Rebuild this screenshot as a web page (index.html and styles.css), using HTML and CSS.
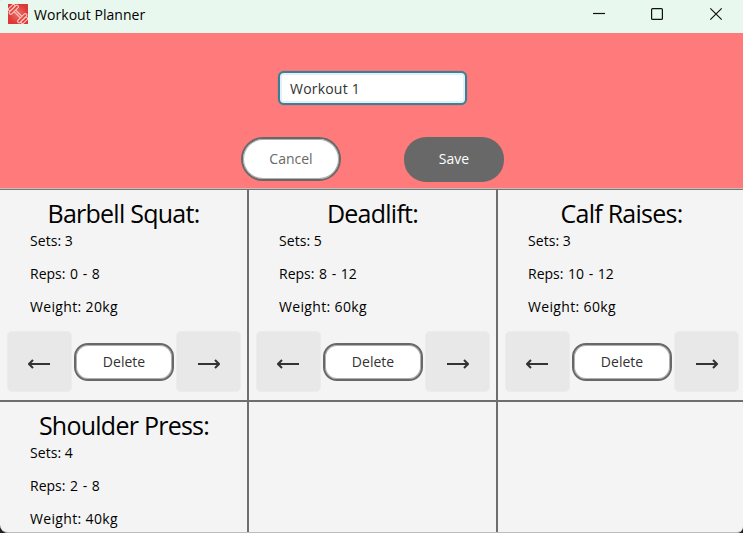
FILE: index.html
```
<!DOCTYPE html>
<html lang="en">
<head>
<meta charset="utf-8">
<title>Workout Planner</title>
<link rel="stylesheet" href="styles.css">
</head>
<body>
<div class="window">
  <header class="titlebar">
    <svg class="logo" width="20" height="20" viewBox="0 0 20 20">
      <defs><radialGradient id="glow"><stop offset="0" stop-color="#e8706f"/><stop offset="1" stop-color="#dc3835"/></radialGradient></defs>
      <rect width="20" height="20" fill="url(#glow)"/>
      <g transform="rotate(45 10 10)" fill="none" stroke="#ffc9c2" stroke-width="1.1">
        <rect x="2.4" y="4.2" width="3.2" height="11.6" rx="1.6"/>
        <rect x="-0.4" y="6" width="2.8" height="8" rx="1.4"/>
        <path d="M5.6 8.9H14.4M5.6 11.1H14.4"/>
        <rect x="14.4" y="4.2" width="3.2" height="11.6" rx="1.6"/>
        <rect x="17.6" y="6" width="2.8" height="8" rx="1.4"/>
      </g>
    </svg>
    <span class="app-name">Workout Planner</span>
    <svg class="controls" width="130" height="14" viewBox="0 0 130 14" fill="none" stroke="#111" stroke-width="1.2">
      <path d="M0 6.5H12"/>
      <rect x="58.6" y="1.6" width="10.8" height="10.8" rx="1"/>
      <path d="M117.3 1.3L128.7 12.7M128.7 1.3L117.3 12.7"/>
    </svg>
  </header>
  <section class="editor">
    <input class="name-field" type="text" value="Workout 1">
    <div class="actions">
      <button class="cancel">Cancel</button>
      <button class="save">Save</button>
    </div>
  </section>
  <main class="grid">
    <article class="cell">
      <h2>Barbell Squat:</h2>
      <p class="sets">Sets: 3</p><p class="reps">Reps: 0 - 8</p><p class="weight">Weight: 20kg</p>
      <div class="tools">
        <button class="move"><svg width="22" height="12" viewBox="0 0 22 12"><path d="M1 6H22M5 2L1 6L5 10"/></svg></button>
        <button class="delete">Delete</button>
        <button class="move next"><svg width="22" height="12" viewBox="0 0 22 12"><path d="M0 6H21M17 2L21 6L17 10"/></svg></button>
      </div>
    </article>
    <article class="cell">
      <h2>Deadlift:</h2>
      <p class="sets">Sets: 5</p><p class="reps">Reps: 8 - 12</p><p class="weight">Weight: 60kg</p>
      <div class="tools">
        <button class="move"><svg width="22" height="12" viewBox="0 0 22 12"><path d="M1 6H22M5 2L1 6L5 10"/></svg></button>
        <button class="delete">Delete</button>
        <button class="move next"><svg width="22" height="12" viewBox="0 0 22 12"><path d="M0 6H21M17 2L21 6L17 10"/></svg></button>
      </div>
    </article>
    <article class="cell">
      <h2>Calf Raises:</h2>
      <p class="sets">Sets: 3</p><p class="reps">Reps: 10 - 12</p><p class="weight">Weight: 60kg</p>
      <div class="tools">
        <button class="move"><svg width="22" height="12" viewBox="0 0 22 12"><path d="M1 6H22M5 2L1 6L5 10"/></svg></button>
        <button class="delete">Delete</button>
        <button class="move next"><svg width="22" height="12" viewBox="0 0 22 12"><path d="M0 6H21M17 2L21 6L17 10"/></svg></button>
      </div>
    </article>
    <article class="cell">
      <h2>Shoulder Press:</h2>
      <p class="sets">Sets: 4</p><p class="reps">Reps: 2 - 8</p><p class="weight">Weight: 40kg</p>
    </article>
    <article class="cell"></article>
    <article class="cell"></article>
  </main>
</div>
</body>
</html>
```
FILE: styles.css
```
* { box-sizing: border-box; }
html { background: #222; }
body {
  margin: 0;
  overflow: hidden;
  font: 14px/20px "Open Sans", "Noto Sans", sans-serif;
  color: #000;
}
button, input { font: inherit; margin: 0; padding: 0; }
.window {
  width: 743px;
  height: 533px;
  display: flex;
  flex-direction: column;
  overflow: hidden;
  background: #f4f4f4;
  border-bottom: 1px solid #bcbcbc;
  border-radius: 1px 0 6px 8px;
}
.titlebar {
  flex: none;
  height: 33px;
  display: flex;
  align-items: flex-start;
  background: #e8f8ee;
  padding: 4px 20px 0 8px;
}
.app-name { margin: 1px 0 0 6px; letter-spacing: 0.05px; }
.controls { margin: 3px 0 0 auto; }
.editor {
  flex: none;
  height: 155px;
  display: flex;
  flex-direction: column;
  align-items: center;
  background: #ff7b7b;
  padding: 38px 0 0 2px;
}
.name-field {
  width: 189px;
  height: 34px;
  border: 2px solid #3f7f96;
  border-radius: 6px;
  outline: none;
  background: #fff;
  box-shadow: inset 0 0 0 2px #dff2f9, 0 0 1px #3f7f96;
  padding-left: 10px;
  color: #323232;
  letter-spacing: 0.2px;
}
.actions {
  display: flex;
  gap: 63px;
  margin-top: 32px;
  align-items: flex-start;
}
.cancel, .save {
  width: 100px;
  height: 44px;
  border-radius: 22px;
  border: 2px solid #686868;
  background: #fff;
  color: #686868;
}
.cancel, .delete { box-shadow: inset 0 0 0 1px #b0b0b0; }
.save { height: 45px; border: 0; background: #686868; color: #fff; padding-bottom: 2px; }
.grid {
  flex: none;
  height: 344px;
  display: grid;
  grid-template-columns: 249px 249px 249px;
  grid-template-rows: 213px 212px;
  border-top: 1px solid #c9bcbc;
  overflow: hidden;
}
.cell {
  border-right: 2px solid #6e6e6e;
  border-bottom: 2px solid #6e6e6e;
  box-shadow: inset 0 1px #777;
  display: flex;
  flex-direction: column;
  overflow: hidden;
}
.cell:nth-child(n+4) { box-shadow: none; }
.cell h2 {
  margin: 9px 0 2px;
  height: 31px;
  font-size: 25px;
  line-height: 31px;
  font-weight: 400;
  letter-spacing: -0.75px;
  text-align: center;
  white-space: nowrap;
}
.cell:nth-child(n+4) h2 { margin-top: 8px; padding-left: 1px; }
.cell p { margin: 0 0 13px 30px; white-space: nowrap; }
.sets { letter-spacing: 0.05px; }
.reps { letter-spacing: 0; word-spacing: 1px; }
.weight { letter-spacing: 0.35px; }
.tools {
  display: flex;
  align-items: center;
  gap: 2px;
  margin: 1px 0 0 7px;
}
.move {
  width: 65px;
  height: 61px;
  border: 1px solid #ececec;
  border-radius: 5px;
  background: #e8e8e8;
  display: grid;
  place-items: center;
  padding: 4px 2px 0 0;
}
.move.next { padding-right: 0; }
.move svg { fill: none; stroke: #333; stroke-width: 2; }
.delete {
  width: 100px;
  height: 38px;
  border: 2px solid #686868;
  border-radius: 14px;
  background: #fff;
  color: #323232;
}
```
